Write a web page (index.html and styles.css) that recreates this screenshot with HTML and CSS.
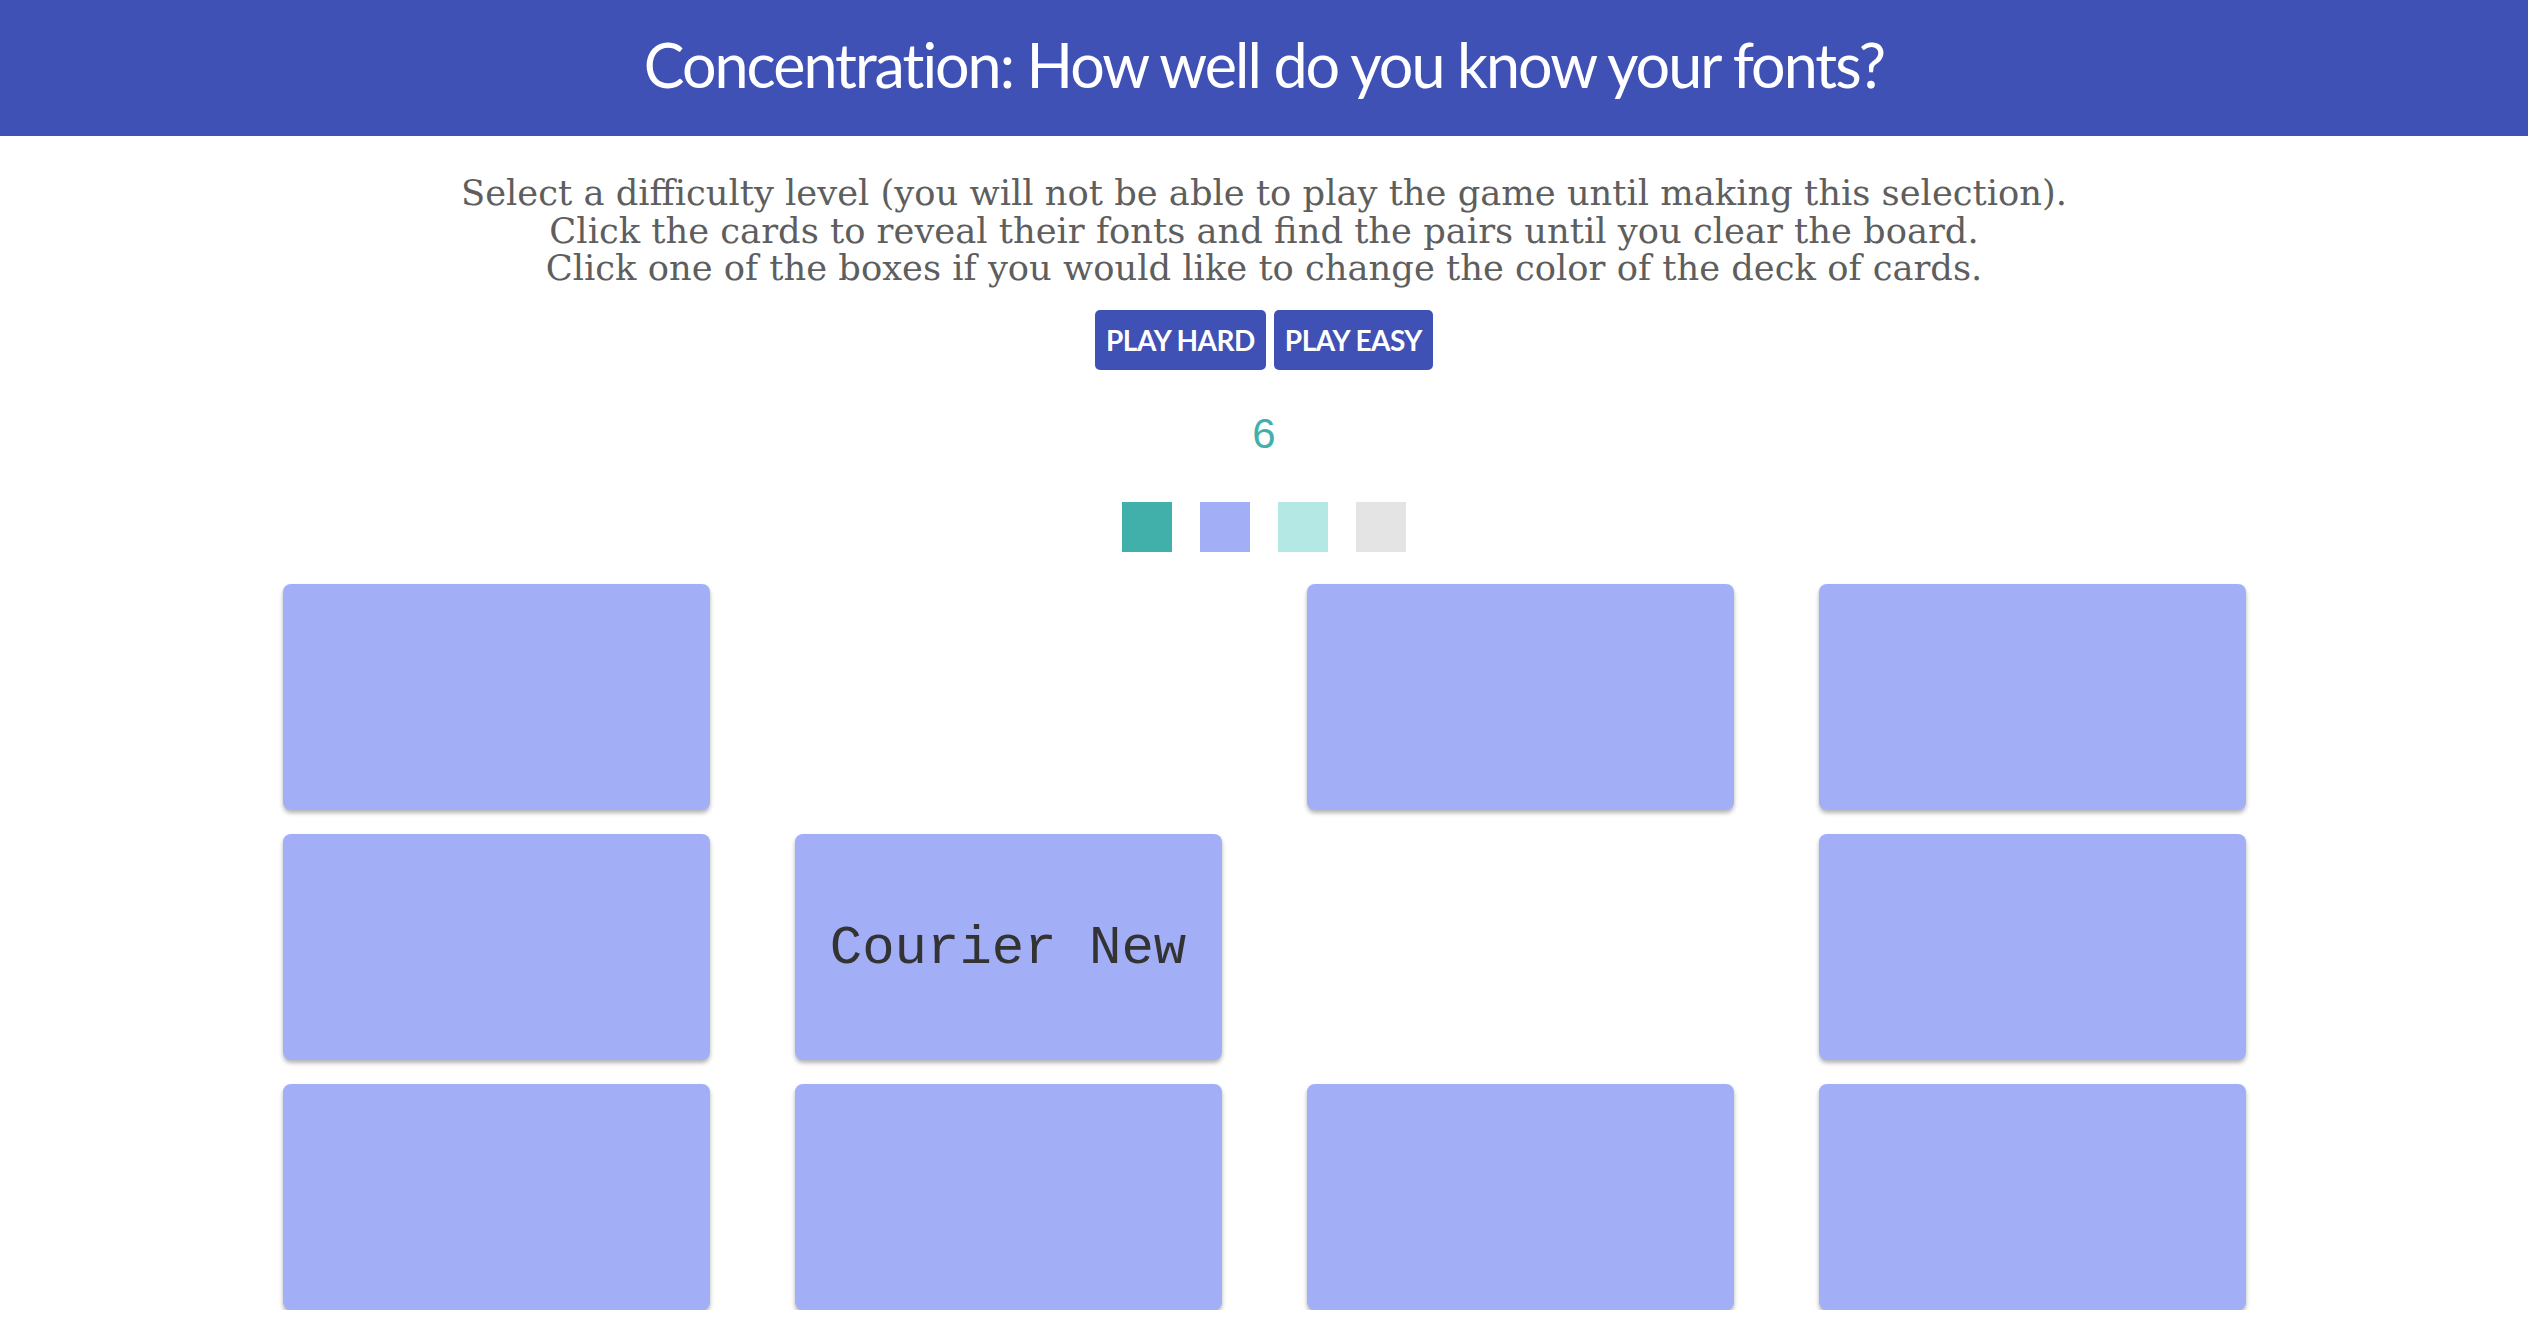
FILE: index.html
```html
<!DOCTYPE html>
<html lang="en">
<head>
<meta charset="utf-8">
<title>Concentration</title>
<link rel="stylesheet" href="styles.css">
</head>
<body>
<header class="topbar">
  <h1 class="title">Concentration: How well do you know your fonts?</h1>
</header>
<main class="main">
  <p class="intro">Select a difficulty level (you will not be able to play the game until making this selection).<br>Click the cards to reveal their fonts and find the pairs until you clear the board.<br>Click one of the boxes if you would like to change the color of the deck of cards.</p>
  <div class="buttons">
    <button class="btn">PLAY HARD</button>
    <button class="btn">PLAY EASY</button>
  </div>
  <div class="counter">6</div>
  <div class="swatches">
    <span class="swatch swatch-teal"></span>
    <span class="swatch swatch-indigo"></span>
    <span class="swatch swatch-aqua"></span>
    <span class="swatch swatch-grey"></span>
  </div>
  <div class="board">
    <div class="card"></div>
    <div class="card card-gone"></div>
    <div class="card"></div>
    <div class="card"></div>
    <div class="card"></div>
    <div class="card"><span class="card-font">Courier New</span></div>
    <div class="card card-gone"></div>
    <div class="card"></div>
    <div class="card"></div>
    <div class="card"></div>
    <div class="card"></div>
    <div class="card"></div>
  </div>
</main>
</body>
</html>
```
FILE: styles.css
```css
html, body {
  margin: 0;
  padding: 0;
  background: #ffffff;
}

body {
  font-family: "Liberation Sans", Arial, sans-serif;
}

.topbar {
  height: 136px;
  background: #3f51b5;
  display: flex;
  align-items: center;
  justify-content: center;
}

.title {
  margin: 0;
  color: #ffffff;
  font-family: Lato, "Liberation Sans", sans-serif;
  font-weight: 400;
  font-size: 61px;
  letter-spacing: -2px;
  line-height: 1;
  padding-bottom: 8px;
}

.main {
  display: flex;
  flex-direction: column;
  align-items: center;
}

.intro {
  margin: 38px 0 0;
  color: #5e5e5e;
  font-family: "DejaVu Serif", serif;
  font-size: 35.3px;
  line-height: 37.5px;
  text-align: center;
}

.buttons {
  margin-top: 23px;
  display: flex;
  gap: 8px;
}

.btn {
  height: 60px;
  padding: 0 11px;
  border: none;
  border-radius: 5px;
  background: #3f51b5;
  color: #ffffff;
  font-family: Lato, "Liberation Sans", sans-serif;
  font-weight: 700;
  font-size: 28px;
  letter-spacing: -0.5px;
}

.counter {
  margin-top: 40px;
  color: #41b0aa;
  font-family: "Liberation Sans", Arial, sans-serif;
  font-size: 42px;
  line-height: 48px;
}

.swatches {
  margin-top: 44px;
  display: flex;
  gap: 28px;
}

.swatch {
  width: 50px;
  height: 50px;
  display: block;
}

.swatch-teal { background: #41b0aa; }
.swatch-indigo { background: #a2aef5; }
.swatch-aqua { background: #b3e8e5; }
.swatch-grey { background: #e4e4e4; }

.board {
  margin-top: 32px;
  display: grid;
  grid-template-columns: repeat(4, 427px);
  grid-auto-rows: 226px;
  column-gap: 85px;
  row-gap: 24px;
}

.card {
  background: #a2aef5;
  border-radius: 8px;
  box-shadow: 0 3px 4px rgba(0, 0, 0, 0.3);
  display: flex;
  align-items: center;
  justify-content: center;
}

.card-gone {
  visibility: hidden;
}

.card-font {
  font-family: "Liberation Mono", "Courier New", monospace;
  font-size: 54px;
  color: #333333;
  padding-top: 4px;
}
```
